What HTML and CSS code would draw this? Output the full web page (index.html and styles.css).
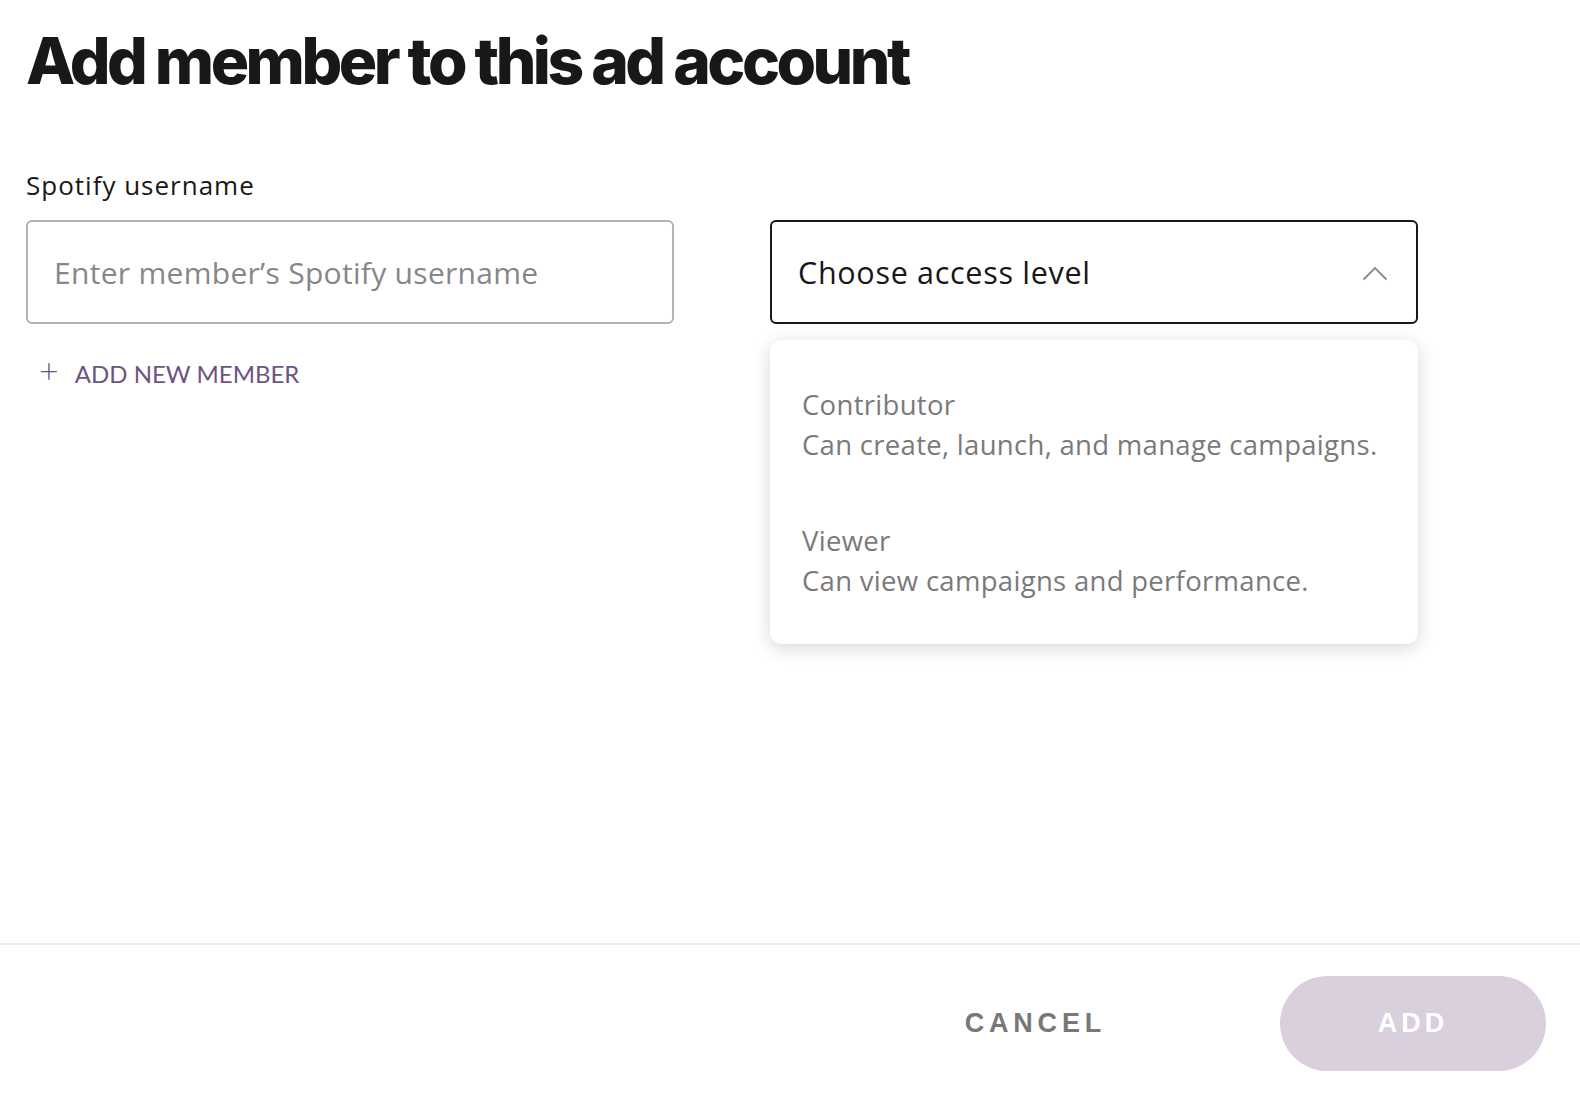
FILE: index.html
```html
<!DOCTYPE html>
<html>
<head lang="en">
    <meta charset="UTF-8">
    <title>Add member</title>
    <link rel="stylesheet" href="styles.css">
</head>
<body>
<div id="page">
    <div id="main">
        <h1 class="title">Add member to this ad account</h1>
        <div class="label">Spotify username</div>
        <div class="row">
            <div class="col">
                <div class="input">Enter member’s Spotify username</div>
                <div class="add-new">
                    <span class="plus">+</span>
                    <span>ADD NEW MEMBER</span>
                </div>
            </div>
            <div class="col select-wrap">
                <div class="select">
                    <span>Choose access level</span>
                    <svg class="chev" width="26" height="16" viewBox="0 0 26 16">
                        <path d="M1.5 14.5 L13 3 L24.5 14.5" fill="none" stroke="#8a8a8a" stroke-width="1.8"/>
                    </svg>
                </div>
                <div class="menu">
                    <div class="option">
                        <div>Contributor</div>
                        <div>Can create, launch, and manage campaigns.</div>
                    </div>
                    <div class="option">
                        <div>Viewer</div>
                        <div>Can view campaigns and performance.</div>
                    </div>
                </div>
            </div>
        </div>
    </div>
    <div id="foot">
        <span class="cancel">CANCEL</span>
        <span class="btn-add">ADD</span>
    </div>
</div>
</body>
</html>
```

FILE: styles.css
```css
*{
    margin: 0;
    padding: 0;
    box-sizing: border-box;
}
body{
    font-family: "Open Sans", "Liberation Sans", sans-serif;
    color: #181818;
    background: #fff;
}
#page{
    height: 100vh;
    display: flex;
    flex-direction: column;
}
#main{
    flex: 1;
    padding: 22px 26px 0 26px;
}
.title{
    font-family: "Inter", "Liberation Sans", sans-serif;
    font-size: 64px;
    font-weight: 800;
    letter-spacing: -3.5px;
    line-height: 78px;
}
.label{
    margin-top: 70px;
    font-size: 26px;
    line-height: 30px;
    letter-spacing: 1px;
}
.row{
    display: flex;
    gap: 96px;
    margin-top: 20px;
}
.col{
    width: 648px;
}
.input{
    height: 104px;
    border: 2px solid #b3b3b3;
    border-radius: 6px;
    padding: 0 26px;
    display: flex;
    align-items: center;
    font-size: 30px;
    letter-spacing: 0.3px;
    color: #878787;
}
.add-new{
    display: flex;
    align-items: center;
    gap: 16px;
    margin: 35px 0 0 13px;
    color: #6d5480;
    font-family: "Lato", "Liberation Sans", sans-serif;
    font-size: 24px;
}
.plus{
    font-size: 34px;
    font-weight: 300;
    line-height: 20px;
    margin-top: -7px;
}
.select-wrap{
    position: relative;
}
.select{
    height: 104px;
    border: 2px solid #181818;
    border-radius: 6px;
    padding: 0 28px 0 26px;
    display: flex;
    align-items: center;
    justify-content: space-between;
    font-size: 30.5px;
    letter-spacing: 0.7px;
}
.chev{
    margin-top: 2px;
}
.menu{
    position: absolute;
    top: 120px;
    left: 0;
    width: 648px;
    height: 304px;
    background: #fff;
    border-radius: 12px;
    box-shadow: 0 4px 18px rgba(0,0,0,0.16);
    padding: 45px 32px;
    color: #7a7a7a;
    font-size: 27.5px;
    line-height: 40px;
    letter-spacing: 0.3px;
}
.option + .option{
    margin-top: 56px;
}
#foot{
    height: 155px;
    border-top: 2px solid #eeeeee;
    display: flex;
    justify-content: flex-end;
    align-items: center;
    padding: 4px 34px 0 0;
}
.cancel{
    font-family: "Liberation Sans", sans-serif;
    font-weight: bold;
    font-size: 27px;
    letter-spacing: 4.8px;
    color: #787878;
    margin-right: 174px;
}
.btn-add{
    width: 266px;
    height: 95px;
    border-radius: 48px;
    background: #d9cfdd;
    color: #fff;
    font-family: "Liberation Sans", sans-serif;
    font-weight: bold;
    font-size: 27px;
    letter-spacing: 4px;
    display: flex;
    align-items: center;
    justify-content: center;
}
```
